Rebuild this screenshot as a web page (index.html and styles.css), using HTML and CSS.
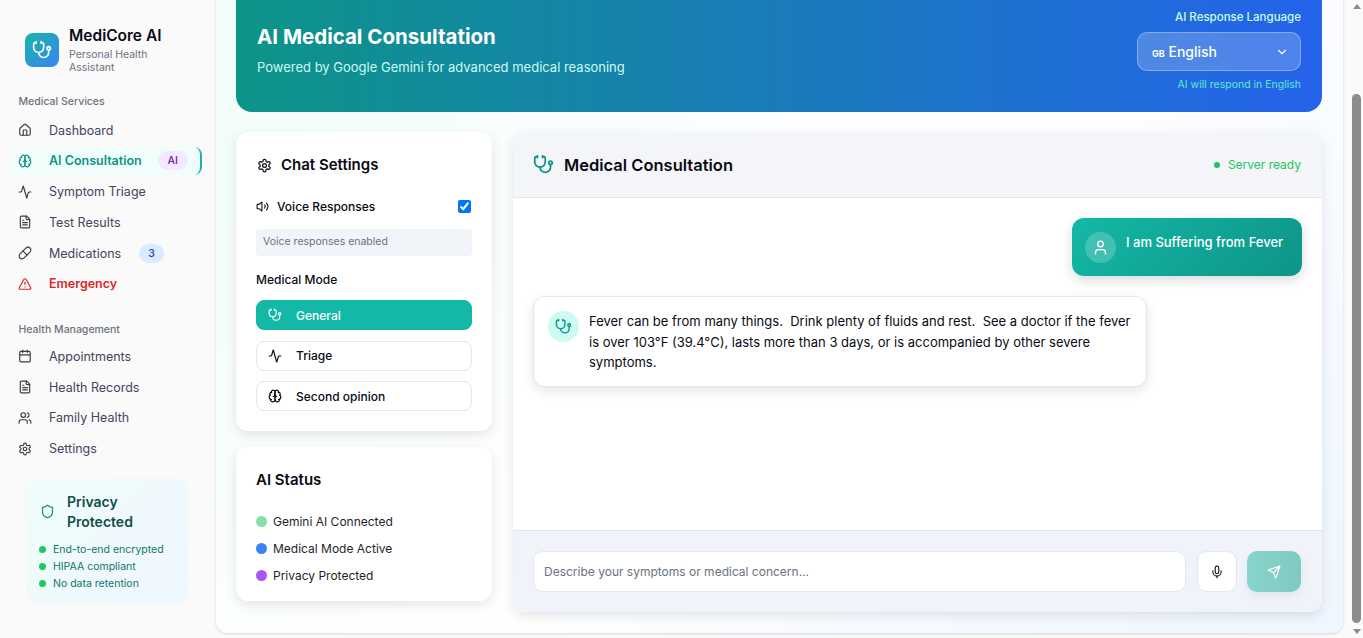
FILE: index.html
```html
<!DOCTYPE html>
<html lang="en">
<head>
    <meta charset="UTF-8">
    <meta name="viewport" content="width=device-width, initial-scale=1.0">
    <title>MediCore AI</title>
    <link rel="stylesheet" href="styles.css">
</head>
<body>
    <!-- Icon sprite -->
    <svg class="sprite" xmlns="http://www.w3.org/2000/svg">
        <symbol id="i-steth" viewBox="0 0 24 24"><path d="M11 2v2"/><path d="M5 2v2"/><path d="M5 3H4a2 2 0 0 0-2 2v4a6 6 0 0 0 12 0V5a2 2 0 0 0-2-2h-1"/><path d="M8 15a6 6 0 0 0 12 0v-3"/><circle cx="20" cy="10" r="2"/></symbol>
        <symbol id="i-home" viewBox="0 0 24 24"><path d="M15 21v-8a1 1 0 0 0-1-1h-4a1 1 0 0 0-1 1v8"/><path d="M3 10a2 2 0 0 1 .709-1.528l7-5.999a2 2 0 0 1 2.582 0l7 5.999A2 2 0 0 1 21 10v9a2 2 0 0 1-2 2H5a2 2 0 0 1-2-2z"/></symbol>
        <symbol id="i-brain" viewBox="0 0 24 24"><path d="M12 5a3 3 0 1 0-5.997.125 4 4 0 0 0-2.526 5.77 4 4 0 0 0 .556 6.588A4 4 0 1 0 12 18Z"/><path d="M12 5a3 3 0 1 1 5.997.125 4 4 0 0 1 2.526 5.77 4 4 0 0 1-.556 6.588A4 4 0 1 1 12 18Z"/><path d="M15 13a4.5 4.5 0 0 1-3-4 4.5 4.5 0 0 1-3 4"/><path d="M17.599 6.5a3 3 0 0 0 .399-1.375"/><path d="M6.003 5.125A3 3 0 0 0 6.401 6.5"/><path d="M3.477 10.896a4 4 0 0 1 .585-.396"/><path d="M19.938 10.5a4 4 0 0 1 .585.396"/><path d="M6 18a4 4 0 0 1-1.967-.516"/><path d="M19.967 17.484A4 4 0 0 1 18 18"/></symbol>
        <symbol id="i-activity" viewBox="0 0 24 24"><path d="M22 12h-2.48a2 2 0 0 0-1.93 1.46l-2.35 8.36a.25.25 0 0 1-.48 0L9.24 2.18a.25.25 0 0 0-.48 0l-2.35 8.36A2 2 0 0 1 4.49 12H2"/></symbol>
        <symbol id="i-file" viewBox="0 0 24 24"><path d="M15 2H6a2 2 0 0 0-2 2v16a2 2 0 0 0 2 2h12a2 2 0 0 0 2-2V7Z"/><path d="M14 2v4a2 2 0 0 0 2 2h4"/><path d="M10 9H8"/><path d="M16 13H8"/><path d="M16 17H8"/></symbol>
        <symbol id="i-pill" viewBox="0 0 24 24"><path d="m10.5 20.5 10-10a4.95 4.95 0 1 0-7-7l-10 10a4.95 4.95 0 1 0 7 7Z"/><path d="m8.5 8.5 7 7"/></symbol>
        <symbol id="i-alert" viewBox="0 0 24 24"><path d="m21.73 18-8-14a2 2 0 0 0-3.48 0l-8 14A2 2 0 0 0 4 21h16a2 2 0 0 0 1.73-3"/><path d="M12 9v4"/><path d="M12 17h.01"/></symbol>
        <symbol id="i-calendar" viewBox="0 0 24 24"><path d="M8 2v4"/><path d="M16 2v4"/><rect width="18" height="18" x="3" y="4" rx="2"/><path d="M3 10h18"/></symbol>
        <symbol id="i-users" viewBox="0 0 24 24"><path d="M16 21v-2a4 4 0 0 0-4-4H6a4 4 0 0 0-4 4v2"/><circle cx="9" cy="7" r="4"/><path d="M22 21v-2a4 4 0 0 0-3-3.87"/><path d="M16 3.13a4 4 0 0 1 0 7.75"/></symbol>
        <symbol id="i-gear" viewBox="0 0 24 24"><path d="M12.22 2h-.44a2 2 0 0 0-2 2v.18a2 2 0 0 1-1 1.73l-.43.25a2 2 0 0 1-2 0l-.15-.08a2 2 0 0 0-2.73.73l-.22.38a2 2 0 0 0 .73 2.73l.15.1a2 2 0 0 1 1 1.72v.51a2 2 0 0 1-1 1.74l-.15.09a2 2 0 0 0-.73 2.73l.22.38a2 2 0 0 0 2.73.73l.15-.08a2 2 0 0 1 2 0l.43.25a2 2 0 0 1 1 1.73V20a2 2 0 0 0 2 2h.44a2 2 0 0 0 2-2v-.18a2 2 0 0 1 1-1.73l.43-.25a2 2 0 0 1 2 0l.15.08a2 2 0 0 0 2.73-.73l.22-.39a2 2 0 0 0-.73-2.73l-.15-.08a2 2 0 0 1-1-1.74v-.5a2 2 0 0 1 1-1.74l.15-.09a2 2 0 0 0 .73-2.73l-.22-.38a2 2 0 0 0-2.73-.73l-.15.08a2 2 0 0 1-2 0l-.43-.25a2 2 0 0 1-1-1.73V4a2 2 0 0 0-2-2z"/><circle cx="12" cy="12" r="3"/></symbol>
        <symbol id="i-shield" viewBox="0 0 24 24"><path d="M20 13c0 5-3.5 7.5-7.66 8.95a1 1 0 0 1-.67-.01C7.5 20.5 4 18 4 13V6a1 1 0 0 1 1-1c2 0 4.5-1.2 6.24-2.72a1.17 1.17 0 0 1 1.52 0C14.51 3.81 17 5 19 5a1 1 0 0 1 1 1z"/></symbol>
        <symbol id="i-volume" viewBox="0 0 24 24"><path d="M11 4.702a.705.705 0 0 0-1.203-.498L6.413 7.587A1.4 1.4 0 0 1 5.416 8H3a1 1 0 0 0-1 1v6a1 1 0 0 0 1 1h2.416a1.4 1.4 0 0 1 .997.413l3.383 3.384A.705.705 0 0 0 11 19.298z"/><path d="M16 9a5 5 0 0 1 0 6"/><path d="M19.364 18.364a9 9 0 0 0 0-12.728"/></symbol>
        <symbol id="i-mic" viewBox="0 0 24 24"><path d="M12 2a3 3 0 0 0-3 3v7a3 3 0 0 0 6 0V5a3 3 0 0 0-3-3Z"/><path d="M19 10v2a7 7 0 0 1-14 0v-2"/><path d="M12 19v3"/></symbol>
        <symbol id="i-send" viewBox="0 0 24 24"><path d="M14.536 21.686a.5.5 0 0 0 .937-.024l6.5-19a.496.496 0 0 0-.635-.635l-19 6.5a.5.5 0 0 0-.024.937l7.93 3.18a2 2 0 0 1 1.112 1.11z"/><path d="m21.854 2.147-10.94 10.939"/></symbol>
        <symbol id="i-user" viewBox="0 0 24 24"><path d="M19 21v-2a4 4 0 0 0-4-4H9a4 4 0 0 0-4 4v2"/><circle cx="12" cy="7" r="4"/></symbol>
        <symbol id="i-chevron" viewBox="0 0 24 24"><path d="m6 9 6 6 6-6"/></symbol>
    </svg>

    <div class="app">
        <!-- Sidebar -->
        <aside class="sidebar">
            <div class="brand">
                <div class="brand-logo"><svg class="icon"><use href="#i-steth"/></svg></div>
                <div>
                    <div class="brand-name">MediCore AI</div>
                    <div class="brand-sub">Personal Health Assistant</div>
                </div>
            </div>

            <div class="nav-title">Medical Services</div>
            <nav class="nav">
                <a class="nav-item"><svg class="icon"><use href="#i-home"/></svg>Dashboard</a>
                <a class="nav-item active"><svg class="icon"><use href="#i-brain"/></svg>AI Consultation<span class="badge badge-ai">AI</span></a>
                <a class="nav-item"><svg class="icon"><use href="#i-activity"/></svg>Symptom Triage</a>
                <a class="nav-item"><svg class="icon"><use href="#i-file"/></svg>Test Results</a>
                <a class="nav-item"><svg class="icon"><use href="#i-pill"/></svg>Medications<span class="badge badge-count">3</span></a>
                <a class="nav-item emergency"><svg class="icon"><use href="#i-alert"/></svg>Emergency</a>
            </nav>

            <div class="nav-title second">Health Management</div>
            <nav class="nav">
                <a class="nav-item"><svg class="icon"><use href="#i-calendar"/></svg>Appointments</a>
                <a class="nav-item"><svg class="icon"><use href="#i-file"/></svg>Health Records</a>
                <a class="nav-item"><svg class="icon"><use href="#i-users"/></svg>Family Health</a>
                <a class="nav-item"><svg class="icon"><use href="#i-gear"/></svg>Settings</a>
            </nav>

            <div class="privacy">
                <div class="privacy-head">
                    <svg class="icon"><use href="#i-shield"/></svg>
                    <span>Privacy Protected</span>
                </div>
                <ul class="privacy-list">
                    <li>End-to-end encrypted</li>
                    <li>HIPAA compliant</li>
                    <li>No data retention</li>
                </ul>
            </div>
        </aside>

        <!-- Main -->
        <main class="main">
            <header class="banner">
                <div>
                    <h1>AI Medical Consultation</h1>
                    <p>Powered by Google Gemini for advanced medical reasoning</p>
                </div>
                <div class="lang">
                    <div class="lang-label">AI Response Language</div>
                    <div class="lang-select">
                        <span><span class="flag">GB</span> English</span>
                        <svg class="icon"><use href="#i-chevron"/></svg>
                    </div>
                    <div class="lang-note">AI will respond in English</div>
                </div>
            </header>

            <div class="content">
                <div class="left-col">
                    <section class="card settings">
                        <h3 class="card-title"><svg class="icon"><use href="#i-gear"/></svg>Chat Settings</h3>
                        <div class="voice-row">
                            <svg class="icon"><use href="#i-volume"/></svg>
                            <span>Voice Responses</span>
                            <input type="checkbox" checked>
                        </div>
                        <div class="voice-note">Voice responses enabled</div>
                        <div class="mode-label">Medical Mode</div>
                        <div class="modes">
                            <button class="mode-btn selected"><svg class="icon"><use href="#i-steth"/></svg>General</button>
                            <button class="mode-btn"><svg class="icon"><use href="#i-activity"/></svg>Triage</button>
                            <button class="mode-btn"><svg class="icon"><use href="#i-brain"/></svg>Second opinion</button>
                        </div>
                    </section>

                    <section class="card status">
                        <h3 class="card-title">AI Status</h3>
                        <div class="status-row"><span class="dot green"></span>Gemini AI Connected</div>
                        <div class="status-row"><span class="dot blue"></span>Medical Mode Active</div>
                        <div class="status-row"><span class="dot purple"></span>Privacy Protected</div>
                    </section>
                </div>

                <section class="chat">
                    <div class="chat-head">
                        <svg class="icon"><use href="#i-steth"/></svg>
                        <h2>Medical Consultation</h2>
                        <div class="server"><span></span>Server ready</div>
                    </div>
                    <div class="messages">
                        <div class="msg msg-user">
                            <div class="avatar"><svg class="icon"><use href="#i-user"/></svg></div>
                            <div>I am Suffering from Fever</div>
                        </div>
                        <div class="msg msg-ai">
                            <div class="avatar"><svg class="icon"><use href="#i-steth"/></svg></div>
                            <div>Fever can be from many things.&nbsp; Drink plenty of fluids and rest.&nbsp; See a doctor if the fever is over 103°F (39.4°C), lasts more than 3 days, or is accompanied by other severe symptoms.</div>
                        </div>
                    </div>
                    <div class="composer">
                        <input type="text" placeholder="Describe your symptoms or medical concern...">
                        <button class="mic-btn"><svg class="icon"><use href="#i-mic"/></svg></button>
                        <button class="send-btn"><svg class="icon"><use href="#i-send"/></svg></button>
                    </div>
                </section>
            </div>
        </main>

        <!-- Page scrollbar -->
        <div class="scrollbar">
            <span class="arrow up"></span>
            <div class="track"><div class="thumb"></div></div>
            <span class="arrow down"></span>
        </div>
    </div>
</body>
</html>
```

FILE: styles.css
```css
* {
    box-sizing: border-box;
}

body {
    margin: 0;
    height: 638px;
    overflow: hidden;
    font-family: Inter, "Liberation Sans", sans-serif;
    background-color: #fafafa;
    color: #0a0a14;
}

.sprite {
    display: none;
}

.icon {
    display: block;
    flex: none;
    fill: none;
    stroke: currentColor;
    stroke-width: 2;
    stroke-linecap: round;
    stroke-linejoin: round;
}

.app {
    display: flex;
    height: 638px;
}

/* Sidebar */
.sidebar {
    width: 216px;
    flex: none;
    padding: 25px 12px 0;
}

.brand {
    display: flex;
    align-items: center;
    gap: 10px;
    padding-left: 13px;
    height: 50px;
    margin-bottom: 20px;
}

.brand-logo {
    width: 34px;
    height: 34px;
    flex: none;
    border-radius: 8px;
    background: linear-gradient(135deg, #14b8a6, #3b82f6);
    color: #fff;
    display: flex;
    align-items: center;
    justify-content: center;
}

.brand-logo .icon {
    width: 20px;
    height: 20px;
}

.brand-name {
    font-size: 15.5px;
    font-weight: 600;
    line-height: 20px;
}

.brand-sub {
    font-size: 10.5px;
    line-height: 13px;
    color: #6b7280;
    margin-top: 2px;
    width: 100px;
}

.nav-title {
    font-size: 10.5px;
    font-weight: 500;
    line-height: 14px;
    color: #6b7280;
    padding-left: 6.5px;
    margin-bottom: 6px;
}

.nav-title.second {
    margin-top: 24px;
    margin-bottom: 4px;
}

.nav-item {
    display: flex;
    align-items: center;
    height: 30.7px;
    padding-left: 6px;
    font-size: 12.5px;
    color: #44445a;
}

.nav-item .icon {
    width: 14px;
    height: 14px;
    margin-right: 17px;
    color: #3c3c46;
}

.nav-item.active {
    width: 190px;
    height: 28px;
    margin: 1px 0 1.7px;
    font-weight: 600;
    color: #0d9488;
    background-color: #f0fdfa;
    border-radius: 8px;
    border-right: 2px solid #14b8a6;
}

.nav-item.active .icon {
    color: #0d9488;
}

.nav-item.emergency,
.nav-item.emergency .icon {
    color: #dc2626;
    font-weight: 600;
}

.badge {
    display: flex;
    align-items: center;
    justify-content: center;
    height: 19px;
    border-radius: 10px;
    font-size: 10.5px;
    font-weight: 500;
}

.badge-ai {
    width: 30px;
    margin-left: 16px;
    background-color: #f3e8ff;
    color: #6b21a8;
}

.badge-count {
    width: 25px;
    margin-left: 18px;
    background-color: #dbeafe;
    color: #1e40af;
}

.privacy {
    width: 162px;
    height: 126px;
    margin: 14px 0 0 14px;
    padding: 14px 13px;
    border-radius: 12px;
    background: linear-gradient(135deg, #f0fdfa, #eff6ff);
}

.privacy-head {
    display: flex;
    align-items: center;
    gap: 12px;
    font-size: 14px;
    font-weight: 600;
    line-height: 20px;
    color: #134e4a;
    margin-bottom: 9px;
}

.privacy-head .icon {
    width: 15px;
    height: 15px;
    margin-left: 1px;
    color: #0d9488;
}

.privacy-head span {
    width: 90px;
}

.privacy-list {
    list-style: none;
    margin: 0;
    padding: 0;
}

.privacy-list li {
    display: flex;
    align-items: center;
    gap: 7px;
    height: 17px;
    font-size: 10.5px;
    color: #0f766e;
}

.privacy-list li::before {
    content: "";
    width: 7px;
    height: 7px;
    border-radius: 50%;
    background-color: #22c55e;
}

/* Main panel */
.main {
    width: 1127px;
    height: 633px;
    flex: none;
    padding: 0 21px 0 20px;
    border-radius: 0 0 12px 12px;
    background: linear-gradient(135deg, #f0fdfa, #ffffff 50%, #eff6ff);
    box-shadow: 0 1px 3px rgba(0, 0, 0, 0.15);
}

.banner {
    height: 112px;
    padding: 0 21px;
    display: flex;
    justify-content: space-between;
    border-radius: 0 0 16px 16px;
    background: linear-gradient(90deg, #0d9488, #2563eb);
    color: #fff;
}

.banner h1 {
    font-size: 20.5px;
    font-weight: 700;
    line-height: 28px;
    margin: 23px 0 0;
}

.banner p {
    font-size: 13px;
    line-height: 20px;
    margin: 6px 0 0;
    color: #ccfbf1;
}

.lang {
    width: 164px;
    padding-top: 9px;
    text-align: right;
}

.lang-label {
    font-size: 11.5px;
    font-weight: 500;
    line-height: 16px;
    color: #ccfbf1;
}

.lang-select {
    display: flex;
    align-items: center;
    justify-content: space-between;
    height: 39px;
    margin-top: 7px;
    padding: 0 11px 0 14px;
    border: 1px solid rgba(255, 255, 255, 0.3);
    border-radius: 10px;
    background-color: rgba(255, 255, 255, 0.2);
    font-size: 14px;
    font-weight: 500;
}

.flag {
    font-size: 9px;
    font-weight: 700;
}

.lang-select .icon {
    width: 14px;
    height: 14px;
}

.lang-note {
    font-size: 10.5px;
    line-height: 14px;
    margin-top: 7px;
    color: #5eead4;
}

/* Two columns */
.content {
    display: flex;
    gap: 21px;
    margin-top: 20px;
}

.left-col {
    width: 256px;
    flex: none;
}

.card {
    background-color: #fff;
    border-radius: 12px;
    box-shadow: 0 4px 12px rgba(0, 0, 0, 0.1);
    padding: 21px 20px;
}

.card-title {
    display: flex;
    align-items: center;
    gap: 9px;
    font-size: 15px;
    font-weight: 600;
    line-height: 24px;
    margin: 0;
}

.card-title .icon {
    width: 15px;
    height: 15px;
    margin-left: 1px;
}

.settings {
    height: 299px;
}

.voice-row {
    display: flex;
    align-items: center;
    gap: 8px;
    margin-top: 20px;
    height: 18px;
    font-size: 12px;
    font-weight: 500;
}

.voice-row .icon {
    width: 13px;
    height: 13px;
}

.voice-row input {
    width: 13px;
    height: 13px;
    margin: 0 1px 0 auto;
}

.voice-note {
    height: 27px;
    margin-top: 14px;
    padding: 0 7px;
    border-radius: 4px;
    background-color: #f1f4f9;
    font-size: 10.5px;
    line-height: 26px;
    color: #6b7280;
}

.mode-label {
    font-size: 12px;
    font-weight: 500;
    line-height: 16px;
    margin-top: 16px;
}

.modes {
    display: flex;
    flex-direction: column;
    gap: 10.5px;
    margin-top: 12px;
}

.mode-btn {
    display: flex;
    align-items: center;
    gap: 14px;
    height: 30px;
    padding: 0 11px;
    font-family: inherit;
    font-size: 12px;
    font-weight: 500;
    color: #0a0a14;
    background-color: #fff;
    border: 1px solid #e5e7f0;
    border-radius: 8px;
}

.mode-btn .icon {
    width: 14px;
    height: 14px;
}

.mode-btn.selected {
    background-color: #14b8a6;
    border-color: #14b8a6;
    color: #fff;
}

.status {
    height: 154px;
    margin-top: 16px;
}

.status-row {
    display: flex;
    align-items: center;
    gap: 6px;
    height: 27px;
    font-size: 12px;
    color: #1e1e2e;
}

.status .card-title {
    margin-bottom: 16px;
}

.dot {
    width: 11px;
    height: 11px;
    border-radius: 50%;
}

.dot.green {
    background-color: #86e0a6;
}

.dot.blue {
    background-color: #3b82f6;
}

.dot.purple {
    background-color: #a855f7;
}

/* Chat */
.chat {
    width: 809px;
    height: 480px;
    display: flex;
    flex-direction: column;
    background-color: #fff;
    border-radius: 12px;
    box-shadow: 0 4px 12px rgba(0, 0, 0, 0.1);
    overflow: hidden;
}

.chat-head {
    display: flex;
    align-items: center;
    gap: 10px;
    height: 66px;
    flex: none;
    padding: 0 21px 0 20px;
    background-color: #f4f5f8;
    border-bottom: 1px solid #e5e7eb;
}

.chat-head .icon {
    width: 21px;
    height: 21px;
    color: #0d9488;
}

.chat-head h2 {
    font-size: 16.5px;
    font-weight: 600;
    margin: 0;
}

.server {
    display: flex;
    align-items: center;
    gap: 8px;
    margin-left: auto;
    font-size: 12px;
    color: #22c55e;
}

.server span {
    width: 6px;
    height: 6px;
    border-radius: 50%;
    background-color: #22c55e;
}

.messages {
    flex: 1;
    padding: 20px;
}

.msg {
    display: flex;
    gap: 10px;
    border-radius: 12px;
    font-size: 13px;
}

.msg-user {
    width: 230px;
    height: 58px;
    margin-left: auto;
    padding: 14px 13px;
    color: #fff;
    font-weight: 500;
    line-height: 20px;
    background: linear-gradient(135deg, #14b8a6, #0d9488);
    box-shadow: 0 4px 12px rgba(0, 0, 0, 0.15);
}

.msg-user .avatar {
    background-color: rgba(255, 255, 255, 0.2);
}

.msg-ai {
    width: 614px;
    height: 91px;
    margin-top: 20px;
    padding: 14px 14px;
    line-height: 20.5px;
    border: 1px solid #e5e7eb;
    background-color: #fff;
    box-shadow: 0 4px 12px rgba(0, 0, 0, 0.1);
}

.msg-ai .avatar {
    background-color: #ccfbf1;
    color: #0d9488;
}

.avatar {
    width: 31px;
    height: 31px;
    flex: none;
    border-radius: 50%;
    display: flex;
    align-items: center;
    justify-content: center;
}

.avatar .icon {
    width: 17px;
    height: 17px;
}

.composer {
    display: flex;
    gap: 10.5px;
    height: 82px;
    flex: none;
    padding: 20px 21px 20px 20px;
    background-color: #f0f3f9;
    border-top: 1px solid #e5e7f0;
}

.composer input {
    flex: 1;
    height: 41px;
    padding: 0 10px;
    font-family: inherit;
    font-size: 12px;
    border: 1px solid #e5e7f0;
    border-radius: 10px;
    background-color: #fff;
}

.composer input::placeholder {
    color: #6b7280;
}

.mic-btn,
.send-btn {
    display: flex;
    align-items: center;
    justify-content: center;
    height: 41px;
    padding: 0;
    border-radius: 10px;
}

.mic-btn {
    width: 40px;
    background-color: #fff;
    border: 1px solid #e5e7f0;
    color: #1e1e2e;
}

.send-btn {
    width: 54px;
    border: none;
    color: #fff;
    background: linear-gradient(90deg, #88d5cd, #7fc9c1);
    box-shadow: 0 4px 10px rgba(0, 0, 0, 0.06);
}

.mic-btn .icon,
.send-btn .icon {
    width: 14px;
    height: 14px;
}

/* Scrollbar */
.scrollbar {
    flex: 1;
    display: flex;
    flex-direction: column;
    align-items: flex-end;
    padding: 4px 2px 4px 0;
}

.track {
    flex: 1;
    width: 9px;
    padding-top: 85px;
    padding-bottom: 6px;
}

.thumb {
    height: 100%;
    border-radius: 5px;
    background-color: #8c8c8c;
}

.arrow {
    width: 0;
    height: 0;
    margin-right: 0;
    border-left: 4.5px solid transparent;
    border-right: 4.5px solid transparent;
}

.arrow.up {
    border-bottom: 5px solid #8c8c8c;
}

.arrow.down {
    border-top: 5px solid #8c8c8c;
}
```
